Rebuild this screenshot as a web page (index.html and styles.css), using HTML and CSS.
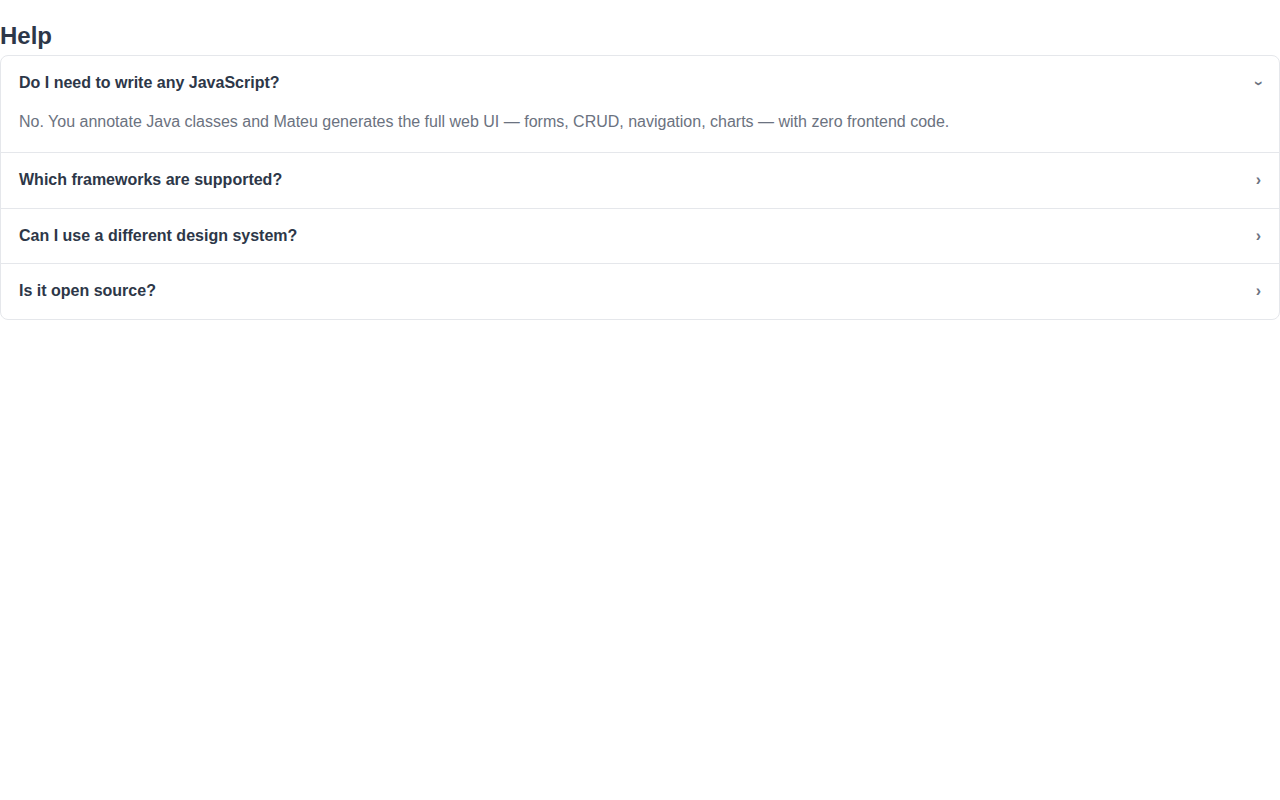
FILE: index.html
```html
<!DOCTYPE html>
<html lang="en">
<head>
    <meta charset="UTF-8">
    <meta name="viewport" content="width=device-width, initial-scale=1.0">
    <title>Help</title>
    <link rel="stylesheet" href="styles.css">
</head>
<body>
    <h2 class="title">Help</h2>

    <div class="accordion">
        <details class="item" open>
            <summary class="question">
                <span>Do I need to write any JavaScript?</span>
                <span class="chevron">›</span>
            </summary>
            <p class="answer">No. You annotate Java classes and Mateu generates the full web UI — forms, CRUD, navigation, charts — with zero frontend code.</p>
        </details>
        <details class="item">
            <summary class="question">
                <span>Which frameworks are supported?</span>
                <span class="chevron">›</span>
            </summary>
        </details>
        <details class="item">
            <summary class="question">
                <span>Can I use a different design system?</span>
                <span class="chevron">›</span>
            </summary>
        </details>
        <details class="item">
            <summary class="question">
                <span>Is it open source?</span>
                <span class="chevron">›</span>
            </summary>
        </details>
    </div>
</body>
</html>
```

FILE: styles.css
```css
body {
    margin: 0;
    font-family: "Liberation Sans", Arial, sans-serif;
    color: #2d3748;
    background-color: #fff;
}
.title {
    font-size: 24px;
    font-weight: bold;
    line-height: 28px;
    margin: 22px 0 5px;
    color: #2d3748;
}
.accordion {
    border: 1px solid #e5e7eb;
    border-radius: 8px;
    overflow: hidden;
}
.item + .item {
    border-top: 1px solid #e5e7eb;
}
.question {
    display: flex;
    justify-content: space-between;
    align-items: center;
    padding: 16px 18px;
    font-size: 16px;
    font-weight: bold;
    line-height: 22.6px;
    cursor: pointer;
    list-style: none;
}
.question::-webkit-details-marker {
    display: none;
}
.chevron {
    color: #6b7280;
    font-size: 16px;
    font-weight: bold;
    display: inline-block;
}
.item[open] .chevron {
    transform: rotate(90deg);
}
.answer {
    margin: 0;
    padding: 0 18px 19px;
    font-size: 16px;
    line-height: 22.6px;
    color: #6b7280;
}
```
